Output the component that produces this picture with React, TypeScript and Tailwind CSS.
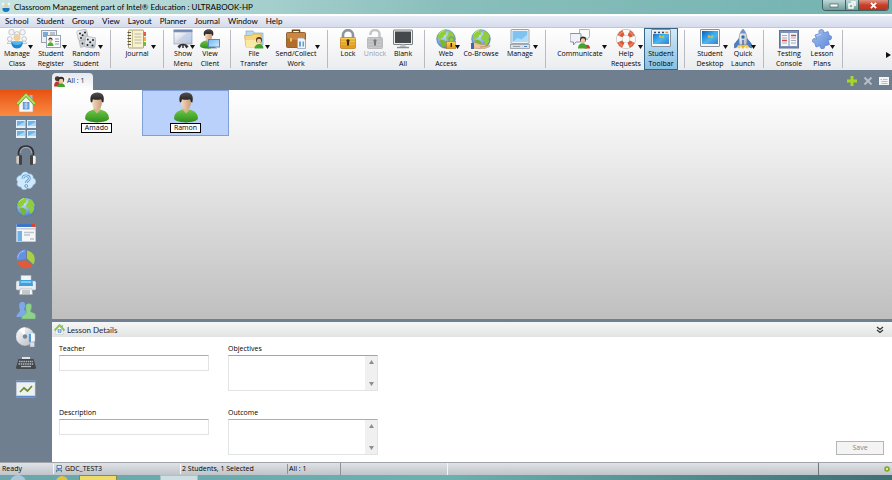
import { ReactNode } from "react";
import clsx from "clsx";

function Defs() {
  return (
    <svg className="absolute h-0 w-0" aria-hidden="true">
      <defs>
        <linearGradient id="gold" x1="0" y1="0" x2="0" y2="1">
          <stop offset="0" stopColor="#fbd65f" />
          <stop offset="1" stopColor="#e59a14" />
        </linearGradient>
        <linearGradient id="steel" x1="0" y1="0" x2="1" y2="1">
          <stop offset="0" stopColor="#fdfdfe" />
          <stop offset="1" stopColor="#b4bcc6" />
        </linearGradient>
        <linearGradient id="screen" x1="0" y1="0" x2="1" y2="1">
          <stop offset="0" stopColor="#0b5fbe" />
          <stop offset="0.5" stopColor="#3fb0f0" />
          <stop offset="1" stopColor="#0a55b5" />
        </linearGradient>
        <linearGradient id="sky" x1="0" y1="0" x2="1" y2="1">
          <stop offset="0" stopColor="#6fb7ee" />
          <stop offset="1" stopColor="#d6ecfb" />
        </linearGradient>
        <linearGradient id="shirt" x1="0" y1="0" x2="0" y2="1">
          <stop offset="0" stopColor="#6cc845" />
          <stop offset="1" stopColor="#2e8c1c" />
        </linearGradient>
        <linearGradient id="skin" x1="0" y1="0" x2="1" y2="0">
          <stop offset="0" stopColor="#f3d9bd" />
          <stop offset="1" stopColor="#c99d78" />
        </linearGradient>
        <linearGradient id="hair" x1="0" y1="0" x2="0" y2="1">
          <stop offset="0" stopColor="#55504e" />
          <stop offset="1" stopColor="#191716" />
        </linearGradient>
        <radialGradient id="ocean" cx="0.4" cy="0.3" r="0.8">
          <stop offset="0" stopColor="#c8e4fc" />
          <stop offset="1" stopColor="#4478c8" />
        </radialGradient>
        <linearGradient id="puzzle" x1="0" y1="0" x2="1" y2="1">
          <stop offset="0" stopColor="#a5c2f2" />
          <stop offset="1" stopColor="#5b86d6" />
        </linearGradient>
      </defs>
    </svg>
  );
}

function Svg({ children, className = "size-5" }: { children: ReactNode; className?: string }) {
  return (
    <svg viewBox="0 0 20 20" className={clsx("shrink-0", className)} aria-hidden="true">
      {children}
    </svg>
  );
}

function Bust() {
  return (
    <>
      <path d="M1.500 17c0-3.500 3-5 6-5.500h5c3 .5 6 2 6 5.500 0 3.500-17 3.500-17 0z" fill="url(#shirt)" />
      <path d="M7.500 11.500l2.500 2.300 2.500-2.300V9h-5z" fill="#d9b38f" />
      <ellipse cx="10" cy="7" rx="3.500" ry="4.500" fill="url(#skin)" />
      <path d="M5.700 6.800C4.300 2.500 6.500.3 10.300.3c3.700 0 5.400 2.200 4.200 6.500l-1-.3-.6-1.800c-2 .5-4.300.4-5.800 0l-.5 1.800z" fill="url(#hair)" />
    </>
  );
}

function Globe() {
  return (
    <>
      <circle cx="10" cy="10" r="9.300" fill="url(#ocean)" stroke="#4b74a8" strokeWidth="0.600" />
      <path d="M1.500 7C2.500 3.500 5.500 1 9 .9l2.500 1.600L9.500 4l.8 1.500-2.300 1-.5 2-2 .5-1 2-2-1.500z" fill="#8fce3a" />
      <path d="M3.500 11.500l3-.8 2.700 1.300 1.300 1.500-1.500 2-1 3.200L6 17.500 4.800 14.500z" fill="#79b92c" />
      <path d="M12.500 2.500l2-.5c2.300 1.500 4 4 4.300 6.500l-1.300 1 .8 2.500-1.800 3.500-2 1.500-1-3.500-.5-2-2.500-1-.5-2.500 2-2 .5-1.500z" fill="#8fce3a" />
      <path d="M3 5c1.200-1.800 3-3 5-3.400" fill="none" stroke="#cdf08f" strokeWidth="0.800" />
    </>
  );
}

function Monitor() {
  return (
    <>
      <rect x="0.500" y="0.500" width="19" height="17" rx="0.500" fill="#f4f6f8" stroke="#8b929b" />
      <rect x="2" y="2" width="16" height="13" fill="url(#screen)" />
      <path d="M8 6l2.500.7v2.600L8 8.500z" fill="#f0b42c" />
      <path d="M11 6.700l2.200-.7v2.500l-2.200.7z" fill="#93d552" />
      <path d="M2 15L18 4v11z" fill="#7fd4fa" opacity="0.350" />
    </>
  );
}

function Padlock({ muted = false }: { muted?: boolean }) {
  return (
    <>
      <path
        d={muted ? "M5.500 6V5a4.500 4 0 0 1 9 0v5" : "M5 9V6a5 4.800 0 0 1 10 0v3"}
        fill="none"
        stroke={muted ? "#c4c6c8" : "#8d949c"}
        strokeWidth="2.600"
      />
      <rect x="2.500" y="8.500" width="15" height="11" rx="1" fill={muted ? "#c6c8ca" : "url(#gold)"} stroke={muted ? "#aaa" : "#b7790f"} strokeWidth="0.700" />
      <path d="M3 11h14M3 14h14M3 17h14" stroke={muted ? "#b0b2b4" : "#d4911a"} strokeWidth="0.800" />
      <path d="M9 11.500h2v5H9z" fill={muted ? "#777" : "#3a2a0c"} />
      <circle cx="10" cy="11.800" r="1.600" fill={muted ? "#777" : "#3a2a0c"} />
    </>
  );
}

const icons = {
  manageClass: (
    <Svg>
      <g fill="#f3f4f6" stroke="#a5abb3" strokeWidth="0.600">
        <circle cx="4.500" cy="3.200" r="2.800" />
        <circle cx="15.500" cy="3.200" r="2.800" />
        <circle cx="10" cy="5" r="2.500" />
        <circle cx="2.800" cy="10" r="2.400" />
        <circle cx="17.200" cy="10" r="2.400" />
        <path d="M0 14.500c.5-3 5-3 5.500 0zM14.500 14.500c.5-3 5-3 5.500 0z" />
      </g>
      <circle cx="10" cy="8.500" r="3.600" fill="#efcf9e" />
      <path d="M4.500 12.500h11c.8 3.500-1.500 7-5.500 7s-6.300-3.500-5.500-7z" fill="#1c86cf" />
      <path d="M5 13h10c0 2-2 3-5 3s-5-1-5-3z" fill="#55b4ea" />
    </Svg>
  ),
  register: (
    <Svg>
      <rect x="0.500" y="1.500" width="15" height="12" fill="#edf1f5" stroke="#99a2ae" />
      <rect x="2" y="3" width="5" height="5" fill="#79a9d8" />
      <path d="M9 4h5M9 6h5" stroke="#8591a2" />
      <rect x="5.500" y="6.500" width="14" height="12" fill="#fbfcfd" stroke="#99a2ae" />
      <circle cx="9.500" cy="10.500" r="2" fill="#4a3428" />
      <circle cx="9.500" cy="11.300" r="1.400" fill="#ecc8a2" />
      <path d="M6.500 17c0-5 6-5 6 0z" fill="#4cae32" />
      <path d="M14 10h4M14 12.500h4M14 15h4" stroke="#7d9abd" />
    </Svg>
  ),
  dice: (
    <Svg>
      <rect x="1.500" y="1" width="10" height="10" rx="1.500" transform="rotate(-12 6 6)" fill="url(#steel)" stroke="#a0a4aa" strokeWidth="0.600" />
      <path d="M3 12l7-1 .5 6-6 1.500z" fill="#ccd0d5" stroke="#a0a4aa" strokeWidth="0.500" />
      <rect x="9" y="8" width="10.500" height="10.500" rx="1.500" transform="rotate(8 14 13)" fill="url(#steel)" stroke="#a0a4aa" strokeWidth="0.600" />
      <g fill="#222">
        <circle cx="4" cy="4.500" r="1" />
        <circle cx="9" cy="3.500" r="1" />
        <circle cx="6.600" cy="6.200" r="1" />
        <circle cx="5" cy="9" r="0.900" />
        <circle cx="11.800" cy="10.500" r="1" />
        <circle cx="17" cy="11" r="1" />
        <circle cx="14.200" cy="13.200" r="1" />
        <circle cx="11.500" cy="16" r="1" />
        <circle cx="16.500" cy="16.500" r="1" />
        <circle cx="6.500" cy="14.500" r="0.900" />
      </g>
    </Svg>
  ),
  journal: (
    <Svg>
      <path d="M16 3h3v4h-3z" fill="#e75b4d" />
      <path d="M16 8h3v4h-3z" fill="#f0b43a" />
      <path d="M16 13h3v4h-3z" fill="#79b74a" />
      <rect x="1.500" y="1" width="15" height="18" rx="0.500" fill="#f7f2cf" stroke="#9b8d5c" strokeWidth="0.800" />
      <path d="M5.500 2v16" stroke="#b9ac78" strokeWidth="0.700" />
      <path d="M7.500 5h7M7.500 8h7M7.500 11h7M7.500 14h7" stroke="#a3a18d" strokeWidth="0.700" />
      <path d="M.5 3.500h3.500M.5 6.500h3.500M.5 9.500h3.500M.5 12.500h3.500M.5 15.500h3.500" stroke="#57554d" strokeWidth="1.200" />
    </Svg>
  ),
  showMenu: (
    <Svg>
      <rect x="0.500" y="0.500" width="19" height="2.500" fill="#6f87b5" />
      <rect x="1" y="3" width="18" height="12" fill="url(#steel)" stroke="#8f9dbb" strokeWidth="0.700" />
      <path d="M3 13L14 4h4v9z" fill="#bccff0" opacity="0.700" />
      <path d="M5 18c2-3.500 8-3.500 10 0M10 15v4M8 16l-2 3M12 16l2 3" stroke="#303236" strokeWidth="1.500" fill="none" />
    </Svg>
  ),
  viewClient: (
    <Svg>
      <g transform="translate(-1.500 0)">
        <Bust />
      </g>
      <rect x="8.500" y="10.500" width="11" height="7.500" fill="url(#sky)" stroke="#5a87b3" />
      <path d="M11 19.500h6" stroke="#c5cdd6" />
    </Svg>
  ),
  fileTransfer: (
    <Svg>
      <path d="M2 2h7l1.500 2H19v12H2z" fill="#b9d9ef" stroke="#7fa9c8" strokeWidth="0.700" />
      <path d="M.5 6.500h7L9 5h8v13H2z" fill="#f5d67a" stroke="#d6ab4a" strokeWidth="0.700" />
      <path d="M1.500 11h15l-1 7H2z" fill="#fae8a6" />
      <circle cx="15" cy="11" r="3" fill="#513620" />
      <circle cx="15" cy="12" r="2.200" fill="#f0caa2" />
      <path d="M10.500 19.500c0-6 9-6 9 0z" fill="#43a52c" />
    </Svg>
  ),
  briefcase: (
    <Svg>
      <path d="M6.500 4V1.200h7V4" fill="none" stroke="#6f4519" strokeWidth="1.500" />
      <rect x="0.500" y="3.500" width="19" height="15" rx="1" fill="#b06d2c" stroke="#80501f" strokeWidth="0.800" />
      <path d="M1 4h18v5c-6 2.500-12 2.500-18 0z" fill="#c98743" />
      <rect x="4" y="9" width="2" height="3.500" fill="#efc35a" />
      <path d="M11.500 9h6l2 2v8.500h-8z" fill="#eef4fb" stroke="#8fa3bf" strokeWidth="0.800" />
      <path d="M13 12.500h2v5h-2zM16.500 12.500h1.500v5h-1.500z" fill="#6a9bd2" />
    </Svg>
  ),
  lock: <Svg><Padlock /></Svg>,
  unlock: <Svg><Padlock muted /></Svg>,
  blank: (
    <Svg>
      <rect x="0.500" y="1" width="19" height="14.500" rx="0.500" fill="#eceeef" stroke="#7c8185" />
      <rect x="2" y="2.500" width="16" height="11.500" fill="#46494c" />
      <path d="M8 15.500h4l1 2.500H7z" fill="#c0c4c8" />
      <path d="M4 18.500h12" stroke="#888d92" strokeWidth="1.500" />
    </Svg>
  ),
  webAccess: (
    <Svg>
      <Globe />
      <path d="M13 13v-2.500a2.500 2.500 0 0 1 5 0V13" fill="none" stroke="#8d949c" strokeWidth="1.300" />
      <rect x="10.500" y="12.500" width="9.500" height="7" fill="url(#gold)" stroke="#b7790f" strokeWidth="0.600" />
      <path d="M15.300 14v4" stroke="#38280a" strokeWidth="1.500" />
    </Svg>
  ),
  coBrowse: (
    <Svg>
      <Globe />
      <path d="M0 15l4-1.500 6 2h4c1.500 0 1.500 1.500 0 2l-5 .5 6-.5 3-1.500c1.500 0 1.500 1.500 0 2L12 20 0 19z" fill="#efc399" stroke="#b4875c" strokeWidth="0.500" />
      <path d="M0 14h3v6H0z" fill="#3f67b0" />
    </Svg>
  ),
  manage: (
    <Svg>
      <rect x="1" y="0.500" width="18" height="14" rx="0.500" fill="#f0f3f6" stroke="#9aa5b2" />
      <rect x="2.500" y="2" width="15" height="11" fill="#7fc3f2" />
      <path d="M2.500 13l5-4 4 1.500 6-5V13z" fill="#bfe2fa" opacity="0.800" />
      <rect x="0.500" y="15.500" width="19" height="4" fill="#dce1e7" stroke="#8792a0" strokeWidth="0.700" />
      <path d="M3 17.500h7" stroke="#959da8" />
      <path d="M14 17.500h3" stroke="#4988cc" />
    </Svg>
  ),
  communicate: (
    <Svg>
      <path d="M9.500.5h9c1 0 1 .5 1 1v6c0 1-.5 1-1 1L17 11l-1-2.500H9.500z" fill="#f9fafb" stroke="#9aa2b0" strokeWidth="0.800" />
      <path d="M1 4.500h9c.8 0 1 .5 1 1V12c0 .8-.5 1-1 1H6l-2.500 3V13H1c-.8 0-1-.5-1-1V5.500c0-.6.200-1 1-1z" fill="#eef2f7" stroke="#7886a5" strokeWidth="0.900" />
      <circle cx="13" cy="10.500" r="3" fill="#3d2b22" />
      <circle cx="13" cy="11.500" r="2.200" fill="#f0caa2" />
      <path d="M14.500 19.500c0-5 5.500-5 5.500 0z" fill="#d8352b" />
      <path d="M8 19.500c0-7 9-7 9 0z" fill="#43a52c" />
    </Svg>
  ),
  help: (
    <Svg>
      <circle cx="10" cy="10" r="6.800" fill="none" stroke="#a7a9ab" strokeWidth="6.200" />
      <circle cx="10" cy="10" r="6.800" fill="none" stroke="#f8f8f6" strokeWidth="5.400" />
      <circle cx="10" cy="10" r="6.800" fill="none" stroke="#da5a34" strokeWidth="5.400" strokeDasharray="5.340 5.340" strokeDashoffset="-2.670" />
      <circle cx="10" cy="10" r="7.800" fill="none" stroke="#fff" strokeWidth="1.200" opacity="0.300" />
    </Svg>
  ),
  studentToolbar: (
    <Svg>
      <Monitor />
      <path d="M2 2h16v3H2z" fill="#e3e9f0" />
      <path d="M3 3.500h2M7 3.500h2M11 3.500h2" stroke="#33465c" strokeWidth="1.500" />
      <path d="M14.500 3.500h2.500" stroke="#e6962a" strokeWidth="1.500" />
    </Svg>
  ),
  desktop: <Svg><Monitor /></Svg>,
  rocket: (
    <Svg>
      <path d="M6 9.500L1.500 15v4L7 16.500zM14 9.500l4.500 5.500v4L13 16.500z" fill="#4d7fc8" stroke="#36609f" strokeWidth="0.600" />
      <path d="M10 0c4 4 4.500 9 3.500 15.500h-7C5.500 9 6 4 10 0z" fill="url(#steel)" stroke="#8793a3" strokeWidth="0.700" />
      <path d="M10 0c1.600 1.600 2.300 3 2.800 4.500H7.200C7.700 3 8.400 1.600 10 0z" fill="#6e93cc" />
      <circle cx="10" cy="8" r="1.700" fill="#39699f" />
      <path d="M10 11v6" stroke="#4e73ab" strokeWidth="1.500" />
      <path d="M7 16h6l-1.500 2-1.500 2-1.500-2z" fill="#f6b51e" />
      <circle cx="6" cy="17.700" r="1.800" fill="#f8d353" />
      <circle cx="14" cy="17.700" r="1.800" fill="#f8d353" />
    </Svg>
  ),
  testing: (
    <Svg>
      <rect x="0.500" y="1.500" width="19" height="17.500" fill="#7d92b4" stroke="#5f7496" />
      <path d="M2 4h7.500v13H2zM10.500 4H18v13h-7.500z" fill="#f5f7fa" />
      <path d="M3 6.500h5M3 9h5M3 14h5M12 9h5M12 11.500h5M12 14h5" stroke="#a5adba" />
      <path d="M3 11.500h5M12 6.500h5" stroke="#d5493c" strokeWidth="1.700" />
    </Svg>
  ),
  lesson: (
    <Svg>
      <path d="M3 6l4.500-1.500C6 2 7.500.5 9.500.5S12.500 2.500 11.500 4l4.500-1.500 1.500 4.500c2-.8 2.500 1 2 2.500s-2.500 2-3.500 1l1.500 5-5 1.500c.5 2-.5 3-2.200 3S7.500 18 8.500 16.500L4 18l-1.500-4.500C.8 13.800 0 12.500.5 11s2.500-1.800 4-.8z" fill="url(#puzzle)" stroke="#5b80ca" strokeWidth="0.700" />
      <path d="M4.500 6.800L9 5.300" stroke="#d2e1fa" strokeWidth="0.800" />
    </Svg>
  ),
};

type ToolItem = {
  icon: ReactNode;
  label: string[];
  width: string;
  menu?: boolean;
  disabled?: boolean;
  active?: boolean;
};

const toolGroups: ToolItem[][] = [
  [
    { icon: icons.manageClass, label: ["Manage", "Class"], width: "w-[34px]", menu: true },
    { icon: icons.register, label: ["Student", "Register"], width: "w-[34px]", menu: true },
    { icon: icons.dice, label: ["Random", "Student"], width: "w-[36px]", menu: true },
  ],
  [{ icon: icons.journal, label: ["Journal"], width: "w-[40px]", menu: true }],
  [
    { icon: icons.showMenu, label: ["Show", "Menu"], width: "w-[26px]", menu: true },
    { icon: icons.viewClient, label: ["View", "Client"], width: "w-[28px]" },
  ],
  [
    { icon: icons.fileTransfer, label: ["File", "Transfer"], width: "w-[34px]", menu: true },
    { icon: icons.briefcase, label: ["Send/Collect", "Work"], width: "w-[50px]", menu: true },
  ],
  [
    { icon: icons.lock, label: ["Lock"], width: "w-[28px]" },
    { icon: icons.unlock, label: ["Unlock"], width: "w-[26px]", disabled: true },
    { icon: icons.blank, label: ["Blank", "All"], width: "w-[30px]" },
  ],
  [
    { icon: icons.webAccess, label: ["Web", "Access"], width: "w-[30px]", menu: true },
    { icon: icons.coBrowse, label: ["Co-Browse"], width: "w-[40px]" },
    { icon: icons.manage, label: ["Manage"], width: "w-[38px]", menu: true },
  ],
  [
    { icon: icons.communicate, label: ["Communicate"], width: "w-[56px]", menu: true },
    { icon: icons.help, label: ["Help", "Requests"], width: "w-[36px]", menu: true },
    { icon: icons.studentToolbar, label: ["Student", "Toolbar"], width: "w-[34px]", active: true },
  ],
  [
    { icon: icons.desktop, label: ["Student", "Desktop"], width: "w-[38px]", menu: true },
    { icon: icons.rocket, label: ["Quick", "Launch"], width: "w-[28px]", menu: true },
  ],
  [
    { icon: icons.testing, label: ["Testing", "Console"], width: "w-[38px]" },
    { icon: icons.lesson, label: ["Lesson", "Plans"], width: "w-[28px]", menu: true },
  ],
];

const menus = ["School", "Student", "Group", "View", "Layout", "Planner", "Journal", "Window", "Help"];

function House() {
  return (
    <>
      <path d="M13.500 2h3v6l-3-3z" fill="#9fb7d8" />
      <path d="M3 10l7-7 7 7v9H3z" fill="#f6f7f5" stroke="#a3ab9b" strokeWidth="0.600" />
      <path d="M1 11.500L10 2l9 9.500" fill="none" stroke="#6aa82a" strokeWidth="3.200" strokeLinejoin="round" />
      <path d="M1.300 10.800L10 1.700l8.700 9.100" fill="none" stroke="#bbe56a" strokeWidth="1.700" />
      <rect x="7.200" y="9.500" width="5.800" height="6.500" fill="#7fb2e8" stroke="#4f7fbe" strokeWidth="0.700" />
      <path d="M10.100 9.500V16" stroke="#e7f1fb" strokeWidth="0.800" />
    </>
  );
}

const sidebar: { name: string; icon: ReactNode }[] = [
  { name: "Home", icon: <House /> },
  {
    name: "Monitor",
    icon: (
      <>
        {["translate(0 1)", "translate(11 1)", "translate(0 11)", "translate(11 11)"].map((t) => (
          <g key={t} transform={t}>
            <rect width="9.500" height="8" fill="#e3f1fb" />
            <rect x="1" y="1" width="7.500" height="5" fill="#6fb3e6" />
            <path d="M1 6l7.500-4v4z" fill="#a9d6f5" />
          </g>
        ))}
      </>
    ),
  },
  {
    name: "Audio",
    icon: (
      <>
        <path d="M2.700 12C1.700 4 5 1 10 1s8.300 3 7.300 11" fill="none" stroke="#2f3134" strokeWidth="1.700" />
        <path d="M4.200 8C5 4 7 2.500 10 2.500S15 4 15.800 8" fill="none" stroke="#b5bac0" strokeWidth="0.800" />
        <rect x="0.300" y="10.500" width="3.700" height="8.500" rx="1.800" fill="#cfc9c2" />
        <rect x="3" y="10" width="3" height="10" rx="1.200" fill="#45423f" />
        <rect x="16" y="10.500" width="3.700" height="8.500" rx="1.800" fill="#f2f0ec" />
        <rect x="14" y="10" width="3" height="10" rx="1.200" fill="#45423f" />
      </>
    ),
  },
  {
    name: "Survey",
    icon: (
      <>
        <path d="M5 4.500C6 .5 11 0 12.500 3c3-.5 5 1.500 4.500 4 3.500 1 3.500 6 0 7-.5 3-3.500 4-5.500 3-2 2.500-6 2-6.500-1C1.500 16 0 13 2 11-.5 8.500 1 4.500 5 4.500z" fill="#cfe8fb" stroke="#a4d0f2" strokeWidth="0.600" />
        <path d="M7 7.500c0-3.700 6.300-3.700 6.300 0 0 2.500-3 2.300-3 4.500" fill="none" stroke="#4d93d3" strokeWidth="2.700" />
        <path d="M7 7.500c0-3.700 6.300-3.700 6.300 0 0 2.500-3 2.300-3 4.500" fill="none" stroke="#d4ebfc" strokeWidth="1.100" />
        <circle cx="10.200" cy="15" r="1.400" fill="#e9f6ff" stroke="#3d87cb" strokeWidth="0.800" />
      </>
    ),
  },
  { name: "Web", icon: <Globe /> },
  {
    name: "Applications",
    icon: (
      <>
        <rect x="0.500" y="1.500" width="19" height="17" fill="#f4f6f8" stroke="#c6d0dc" strokeWidth="0.700" />
        <path d="M.5 1h19v3H.5z" fill="#3f75c6" />
        <path d="M16 1h3.500v3H16z" fill="#d04836" />
        <path d="M1 5h18v1.500H1z" fill="#c8ced6" />
        <path d="M1.500 8H6v10H1.500z" fill="#69b3e8" />
        <path d="M8 9.500h10M8 12h6M14 16h4" stroke="#c0c5cb" strokeWidth="1.500" />
      </>
    ),
  },
  {
    name: "Survey results",
    icon: (
      <>
        <path d="M9.800 10L1 11.500C.3 5 3.500.5 9.800.3z" fill="#6690e6" />
        <path d="M11 9.500V1.500c7 1 9.500 8 6.500 14z" fill="#a8cf45" />
        <path d="M9.800 11.200l6.700 5.300c-4 4.500-13 4-15.300-3.800z" fill="#e25a3a" />
        <path d="M8.500 2C4.500 2.500 2 5 1.800 9" fill="none" stroke="#a9c5f6" />
      </>
    ),
  },
  {
    name: "Printing",
    icon: (
      <>
        <path d="M5 .5h10V7H5z" fill="#f2f5f8" stroke="#b5bdc7" strokeWidth="0.600" />
        <rect x="0" y="6" width="20" height="9" rx="1.500" fill="#e8ecf0" stroke="#aab3bd" strokeWidth="0.600" />
        <path d="M3.500 5h13l.5 6H3z" fill="#3ea0dc" />
        <path d="M5 6h10l.2 2H4.800z" fill="#85cbf1" />
        <path d="M4 14h12l.5 5.500h-13z" fill="#fafbfc" stroke="#a4acb6" strokeWidth="0.600" />
        <path d="M6 16h8M6 18h8" stroke="#8d949c" />
      </>
    ),
  },
  {
    name: "Chat",
    icon: (
      <>
        <path d="M3.500 2.500c1-2 5-2 5.500 0 .6 3-.5 4-1 6L11 11v5H.5c0-4 3.500-4 3.500-7-1-2-1-4-.5-6.500z" fill="#7da9ea" />
        <path d="M10 4c1-2 5-2 5.500 0 .6 3-.5 4-1 6.500l5 2.500v5H5.500c0-5 4.500-4 5-7-1-2-1-4.500-.5-7z" fill="#8fd08d" stroke="#65aa69" strokeWidth="0.500" />
      </>
    ),
  },
  {
    name: "Storage",
    icon: (
      <>
        <circle cx="9" cy="9.500" r="9" fill="url(#steel)" stroke="#d6d9dd" strokeWidth="0.500" />
        <path d="M9 9.500L3 3c2-2 4-2.500 6-2.500z" fill="#fff" />
        <circle cx="9" cy="9.500" r="2.200" fill="#7d858f" />
        <rect x="13" y="6" width="6" height="9" rx="1.500" fill="#f6f9fc" stroke="#9db7d4" strokeWidth="0.500" />
        <path d="M13 7h2v8h-2z" fill="#4a9de2" />
        <rect x="14" y="15" width="4.500" height="5" fill="#dde1e6" stroke="#969ea8" strokeWidth="0.600" />
      </>
    ),
  },
  {
    name: "Keyboard",
    icon: (
      <>
        <path d="M6 4h8v3H6z" fill="#e0e3e6" />
        <path d="M2.500 6h15L20 14.500c0 1.500-1 1.500-2 1.500H2c-1 0-2 0-2-1.500z" fill="#45484b" />
        <path d="M3 8.500h14M2.500 11h15" stroke="#b4b8bc" strokeWidth="1.300" strokeDasharray="1.500 0.700" />
        <path d="M5 13.500h10" stroke="#b4b8bc" strokeWidth="1.300" />
      </>
    ),
  },
  {
    name: "Whiteboard",
    icon: (
      <>
        <rect x="0.500" y="2" width="18.500" height="16" fill="#edf1f0" stroke="#cfd6de" strokeWidth="0.600" />
        <path d="M.2 2.500h19M.2 17.500h19" stroke="#5d86cc" strokeWidth="1.700" />
        <path d="M4 13l4-4 3.500 3L16 7" fill="none" stroke="#6f8d2e" strokeWidth="1.700" />
      </>
    ),
  },
];

function ToolButton({ item }: { item: ToolItem }) {
  return (
    <button
      type="button"
      disabled={item.disabled}
      className={clsx(
        "relative flex h-[42px] shrink-0 flex-col items-center pt-px text-[7px] leading-[10px] whitespace-nowrap",
        item.width,
        item.disabled ? "text-gray-400" : "text-black",
        item.active && "bg-linear-to-b from-[#d5ebf8] to-[#83bfe2] outline outline-[#38668a] -outline-offset-1"
      )}
    >
      {item.icon}
      {item.label.map((line) => (
        <span key={line}>{line}</span>
      ))}
      {item.menu && (
        <svg viewBox="0 0 5 4" className="absolute right-px top-[17px] h-1 w-[5px]" aria-hidden="true">
          <path d="M0 0h5L2.500 4z" fill="#111" />
        </svg>
      )}
    </button>
  );
}

function TitleBar() {
  return (
    <header className="flex h-[14px] items-start justify-between bg-linear-to-r from-[#9fd0cc] via-[#6fb0ad] to-[#78b6b3]">
      <div className="flex h-full flex-1 items-center gap-[3px] bg-linear-to-r from-white/40 via-white/20 to-transparent">
        <Svg className="ml-px size-[10px]">
          <circle cx="4" cy="4" r="3" fill="#eef3f6" />
          <circle cx="16" cy="4" r="3" fill="#eef3f6" />
          <circle cx="10" cy="8" r="4" fill="#e8cfa8" />
          <path d="M3 12h14c1 5-2 8-7 8s-8-3-7-8z" fill="#1878bd" />
        </Svg>
        <h1 className="text-[8px] leading-[14px] text-black">
          Classroom Management part of Intel® Education : ULTRABOOK-HP
        </h1>
      </div>
      <div className="mr-[3px] flex h-[11px] overflow-hidden rounded-b-sm border border-t-0 border-[#40605f]">
        <button type="button" aria-label="Minimize" className="flex w-[22px] items-center justify-center bg-linear-to-b from-[#bcd8d6] to-[#6d9d9b]">
          <svg viewBox="0 0 10 6" className="h-[6px] w-[10px]"><rect x="1" y="2" width="8" height="3" fill="#fff" stroke="#47605f" strokeWidth="0.700" /></svg>
        </button>
        <button type="button" aria-label="Restore" className="flex w-[14px] items-center justify-center border-x border-[#40605f] bg-linear-to-b from-[#bcd8d6] to-[#6d9d9b]">
          <svg viewBox="0 0 8 8" className="size-2"><path d="M3 1h4v4M1 3h4v4H1z" fill="none" stroke="#fff" strokeWidth="1.500" /></svg>
        </button>
        <button type="button" aria-label="Close" className="flex w-[29px] items-center justify-center bg-linear-to-b from-[#dc9080] via-[#c8402c] to-[#b8341f]">
          <svg viewBox="0 0 8 8" className="size-[7px]"><path d="M1 1l6 6M7 1L1 7" stroke="#fff" strokeWidth="2" /></svg>
        </button>
      </div>
    </header>
  );
}

function Toolbar() {
  return (
    <div className="flex items-start overflow-hidden border-t border-[#c0c6d8] bg-linear-to-b from-white to-[#ebecef] font-['Open_Sans',sans-serif]">
      {toolGroups.map((group, i) => (
        <div key={i} className="flex shrink-0">
          {group.map((item) => (
            <ToolButton key={item.label.join(" ")} item={item} />
          ))}
          <div className="mx-[6px] my-0.5 w-px bg-[#b9bbc0]" />
        </div>
      ))}
      <button type="button" aria-label="More tools" className="mr-px ml-auto self-center pt-3">
        <svg viewBox="0 0 5 6" className="h-[6px] w-[5px]"><path d="M0 0l5 3-5 3z" fill="#111" /></svg>
      </button>
    </div>
  );
}

function TabStrip() {
  return (
    <div className="flex h-5 items-end justify-between bg-[#6f7f8f] pl-[52px]">
      <button type="button" className="flex h-[17px] w-[41px] items-center gap-0.5 rounded-t bg-linear-to-b from-[#e4e8ed] to-white pl-0.5 text-[7px] whitespace-nowrap text-[#10283c] font-['Open_Sans',sans-serif]">
        <Svg className="size-[11px]">
          <circle cx="6" cy="5" r="4.500" fill="#50352a" />
          <path d="M0 19c0-12 11-12 11 0z" fill="#c5352b" />
          <circle cx="13" cy="7" r="5.500" fill="#332822" />
          <circle cx="13" cy="9" r="4" fill="#f0caa2" />
          <path d="M6 20c0-9 14-9 14 0z" fill="#43a52c" />
        </Svg>
        All : 1
      </button>
      <div className="flex h-full items-center gap-1.5 pt-0.5 pr-[3px]">
        <button type="button" aria-label="Add group">
          <svg viewBox="0 0 10 10" className="block size-[10px]"><path d="M3.500 0h3v3.500H10v3H6.500V10h-3V6.500H0v-3h3.500z" fill="#a8d628" /></svg>
        </button>
        <button type="button" aria-label="Remove group">
          <svg viewBox="0 0 10 10" className="block size-[10px]"><path d="M1.500 1.500l7 7M8.500 1.500l-7 7" stroke="#b7bfc7" strokeWidth="2" /></svg>
        </button>
        <button type="button" aria-label="Group list">
          <svg viewBox="0 0 10 10" className="block size-[10px]">
            <path d="M0 1h10v8H0z" fill="#f3f5f7" />
            <path d="M1.500 3.500H3M4 3.500h4.500M2.500 5.500h6M2.500 7.500h6" stroke="#9aa5b0" strokeWidth="0.700" />
          </svg>
        </button>
      </div>
    </div>
  );
}

function Student({ name, selected = false }: { name: string; selected?: boolean }) {
  return (
    <button
      type="button"
      className={clsx(
        "flex h-[46px] w-[87px] flex-col items-center border pt-px",
        selected ? "border-[#7f9fd6] bg-[#b9d1fb]" : "border-transparent"
      )}
    >
      <svg viewBox="0 0 20 20" preserveAspectRatio="none" className="h-[31px] w-7" aria-hidden="true">
        <Bust />
      </svg>
      <span className="border border-black bg-white px-[3px] text-[7px] leading-[8px] text-black font-['Open_Sans',sans-serif]">{name}</span>
    </button>
  );
}

function ScrollArea({ id, label, focused = false }: { id: string; label: string; focused?: boolean }) {
  return (
    <div className="flex flex-col">
      <label htmlFor={id} className="leading-[13px]">{label}</label>
      <div className={clsx("flex h-9 border border-[#e2e3e6]", focused ? "border-t-[#8fa9bd]" : "border-t-[#abadb3]")}>
        <textarea id={id} className="min-w-0 flex-1 resize-none overflow-hidden bg-white px-1 outline-none" />
        <div className="flex w-3 flex-col items-center justify-between bg-[#f0f0f0] py-1">
          <svg viewBox="0 0 5 4" className="h-1 w-[5px]"><path d="M0 4h5L2.500 0z" fill="#8e8e8e" /></svg>
          <svg viewBox="0 0 5 4" className="h-1 w-[5px]"><path d="M0 0h5L2.500 4z" fill="#8e8e8e" /></svg>
        </div>
      </div>
    </div>
  );
}

function Field({ id, label }: { id: string; label: string }) {
  return (
    <div className="flex flex-col">
      <label htmlFor={id} className="leading-[13px]">{label}</label>
      <input id={id} type="text" className="h-4 border border-[#e2e3e6] border-t-[#abadb3] bg-white px-1 outline-none" />
    </div>
  );
}

function LessonDetails() {
  return (
    <section className="border-t-[3px] border-[#6f7f8f] bg-white text-black">
      <div className="flex h-[15px] items-center bg-linear-to-b from-[#f6f6f6] to-[#e2e4e4] pl-0.5 pr-2">
        <Svg className="size-[11px]"><House /></Svg>
        <h2 className="ml-0.5 flex-1 text-[8px] text-[#222a38]">Lesson Details</h2>
        <button type="button" aria-label="Collapse">
          <svg viewBox="0 0 8 8" className="block size-2"><path d="M1 1l3 2.500L7 1M1 4l3 2.500L7 4" fill="none" stroke="#333" strokeWidth="1.200" /></svg>
        </button>
      </div>
      <form className="flex items-end justify-between pt-[5px] pr-2 pb-[7px] pl-[7px] text-[7px] font-['Open_Sans',sans-serif]">
        <div className="grid grid-cols-[150px_150px] gap-x-[19px] gap-y-[15px]">
          <Field id="teacher" label="Teacher" />
          <ScrollArea id="objectives" label="Objectives" focused />
          <Field id="description" label="Description" />
          <ScrollArea id="outcome" label="Outcome" />
        </div>
        <button type="submit" disabled className="h-[14px] w-12 border border-[#b4b6b9] bg-[#f4f4f4] text-[#85878b]">Save</button>
      </form>
    </section>
  );
}

function StatusBar() {
  return (
    <footer className="flex h-[13px] shrink-0 items-center border-t border-[#a0a4aa] bg-linear-to-b from-[#dfe2e6] to-[#bfc4ca] text-[7px] text-black font-['Open_Sans',sans-serif]">
      <span className="w-[53px] pl-0.5">Ready</span>
      <span className="flex w-[127px] items-center gap-0.5 border-l border-[#f4f5f6] pl-px">
        <Svg className="size-2">
          <path d="M5 1h11v8H5z" fill="#e5f0fa" stroke="#2f629b" strokeWidth="2" />
          <path d="M9 9v4M3 13h14M4 13v5M16 13v5" stroke="#2f629b" strokeWidth="2" />
        </Svg>
        GDC_TEST3
      </span>
      <span className="w-[107px] border-l border-[#f4f5f6] pl-px">2 Students, 1 Selected</span>
      <span className="w-[53px] border-l border-[#8c9299] pl-px">All : 1</span>
      <span className="h-full w-[107px] border-l border-[#8c9299]" />
      <span className="h-full flex-1 border-l border-[#f4f5f6]" />
      <span className="flex h-full w-[74px] items-center justify-end border-l border-[#70767d] pr-0.5">
        <svg viewBox="0 0 6 6" className="size-[6px]"><circle cx="3" cy="3" r="2" fill="#d8ea9a" stroke="#7fa41f" strokeWidth="1.500" /></svg>
      </span>
    </footer>
  );
}

function Taskbar() {
  return (
    <div className="flex h-[5px] shrink-0 overflow-hidden bg-linear-to-r from-[#6aa6ab] via-[#6cb0b0] to-[#3f7073]">
      <div className="ml-[10px] h-4 w-4 rounded-full bg-[#a9c9db]" />
      <div className="mt-px ml-[30px] h-4 w-3 rounded-full bg-[#e0c345]" />
      <div className="ml-[11px] w-[38px] border-x border-t border-[#8c8a3c] bg-[#eddc6b]" />
      <div className="ml-[43px] w-[38px] border-x border-t border-[#a4c4c6] bg-[#cddfe0]" />
    </div>
  );
}

export default function App() {
  return (
    <div className="flex min-h-screen flex-col bg-white font-[Lato,sans-serif]">
      <Defs />
      <TitleBar />
      <nav className="flex h-[13px] items-center gap-2 border-t-2 border-white bg-linear-to-b from-[#e9edf7] to-[#d6dcec] pl-[5px]">
        {menus.map((menu) => (
          <button key={menu} type="button" className="text-[8px] leading-[11px] text-black">
            {menu}
          </button>
        ))}
      </nav>
      <Toolbar />
      <TabStrip />
      <div className="flex flex-1">
        <nav className="flex w-[52px] shrink-0 flex-col bg-[#6f7f8f]">
          {sidebar.map((entry, i) => (
            <button
              key={entry.name}
              type="button"
              aria-label={entry.name}
              className={clsx(
                "flex h-[26px] items-center justify-center",
                i === 0 && "bg-linear-to-b from-[#e8500f] to-[#f98b41]"
              )}
            >
              <Svg>{entry.icon}</Svg>
            </button>
          ))}
        </nav>
        <main className="flex min-w-0 flex-1 flex-col">
          <div className="flex flex-1 items-start gap-0.5 bg-linear-to-b from-white to-[#c0bfbf] pl-px">
            <Student name="Amado" />
            <Student name="Ramon" selected />
          </div>
          <LessonDetails />
        </main>
      </div>
      <StatusBar />
      <Taskbar />
    </div>
  );
}
